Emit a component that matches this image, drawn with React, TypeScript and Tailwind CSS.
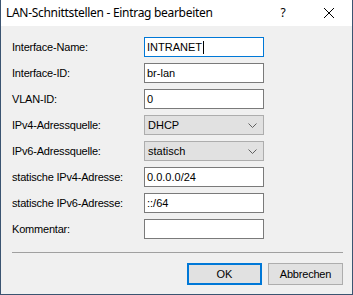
import React from 'react';

const rows: { label: string; value: string; kind: 'input' | 'select'; focused?: boolean }[] = [
  { label: 'Interface-Name:', value: 'INTRANET', kind: 'input', focused: true },
  { label: 'Interface-ID:', value: 'br-lan', kind: 'input' },
  { label: 'VLAN-ID:', value: '0', kind: 'input' },
  { label: 'IPv4-Adressquelle:', value: 'DHCP', kind: 'select' },
  { label: 'IPv6-Adressquelle:', value: 'statisch', kind: 'select' },
  { label: 'statische IPv4-Adresse:', value: '0.0.0.0/24', kind: 'input' },
  { label: 'statische IPv6-Adresse:', value: '::/64', kind: 'input' },
  { label: 'Kommentar:', value: '', kind: 'input' },
];

const Chevron = () => (
  <svg width="9" height="5" viewBox="0 0 9 5" className="shrink-0">
    <path d="M0.5 0.5 L4.5 4.5 L8.5 0.5" fill="none" stroke="#606060" strokeWidth="1" />
  </svg>
);

export default function App() {
  return (
    <div
      className="w-[353px] h-[295px] flex flex-col border-x border-b border-[#3b5471] bg-[#f0f0f0] text-black"
      style={{ fontFamily: '"Liberation Sans", Arial, sans-serif' }}
    >
      {/* Title bar */}
      <div className="h-[26px] bg-white flex items-center pl-[5px] shrink-0">
        <span
          className="text-[12px] tracking-[-0.3px] flex-1"
          style={{ fontFamily: '"Noto Sans", sans-serif' }}
        >
          LAN-Schnittstellen - Eintrag bearbeiten
        </span>
        <span className="text-[12px] w-[46px] text-center" style={{ fontFamily: '"Noto Sans", sans-serif' }}>?</span>
        <span className="w-[46px] flex items-center justify-center">
          <svg width="10" height="10" viewBox="0 0 10 10">
            <path d="M0 0 L10 10 M10 0 L0 10" stroke="#000" strokeWidth="1" />
          </svg>
        </span>
      </div>

      {/* Form */}
      <div className="flex-1 flex flex-col pl-[11px] pr-[9px] pt-[11px]">
        <div className="grid grid-cols-[132px_120px] gap-y-[6px] text-[11px]">
          {rows.map((r) => (
            <React.Fragment key={r.label}>
              <div className="h-[20px] flex items-center tracking-[-0.2px]">{r.label}</div>
              {r.kind === 'input' ? (
                <div
                  className={`h-[20px] flex items-center px-[2px] bg-white border ${
                    r.focused ? 'border-[#0078d7]' : 'border-[#7a7a7a]'
                  }`}
                >
                  <span>{r.value}</span>
                  {r.focused && <span className="w-px h-[13px] bg-black ml-[1px]" />}
                </div>
              ) : (
                <div className="h-[20px] flex items-center justify-between pl-[3px] pr-[6px] bg-[#e1e1e1] border border-[#adadad]">
                  <span>{r.value}</span>
                  <Chevron />
                </div>
              )}
            </React.Fragment>
          ))}
        </div>

        <div className="mt-[13px] h-px bg-[#a0a0a0]" />

        <div className="mt-[10px] flex justify-end gap-[6px] text-[11px]">
          <button className="w-[75px] h-[22px] bg-[#e1e1e1] border-2 border-[#0078d7]">OK</button>
          <button className="w-[75px] h-[22px] bg-[#e1e1e1] border border-[#adadad] tracking-[-0.2px]">Abbrechen</button>
        </div>
      </div>
    </div>
  );
}
